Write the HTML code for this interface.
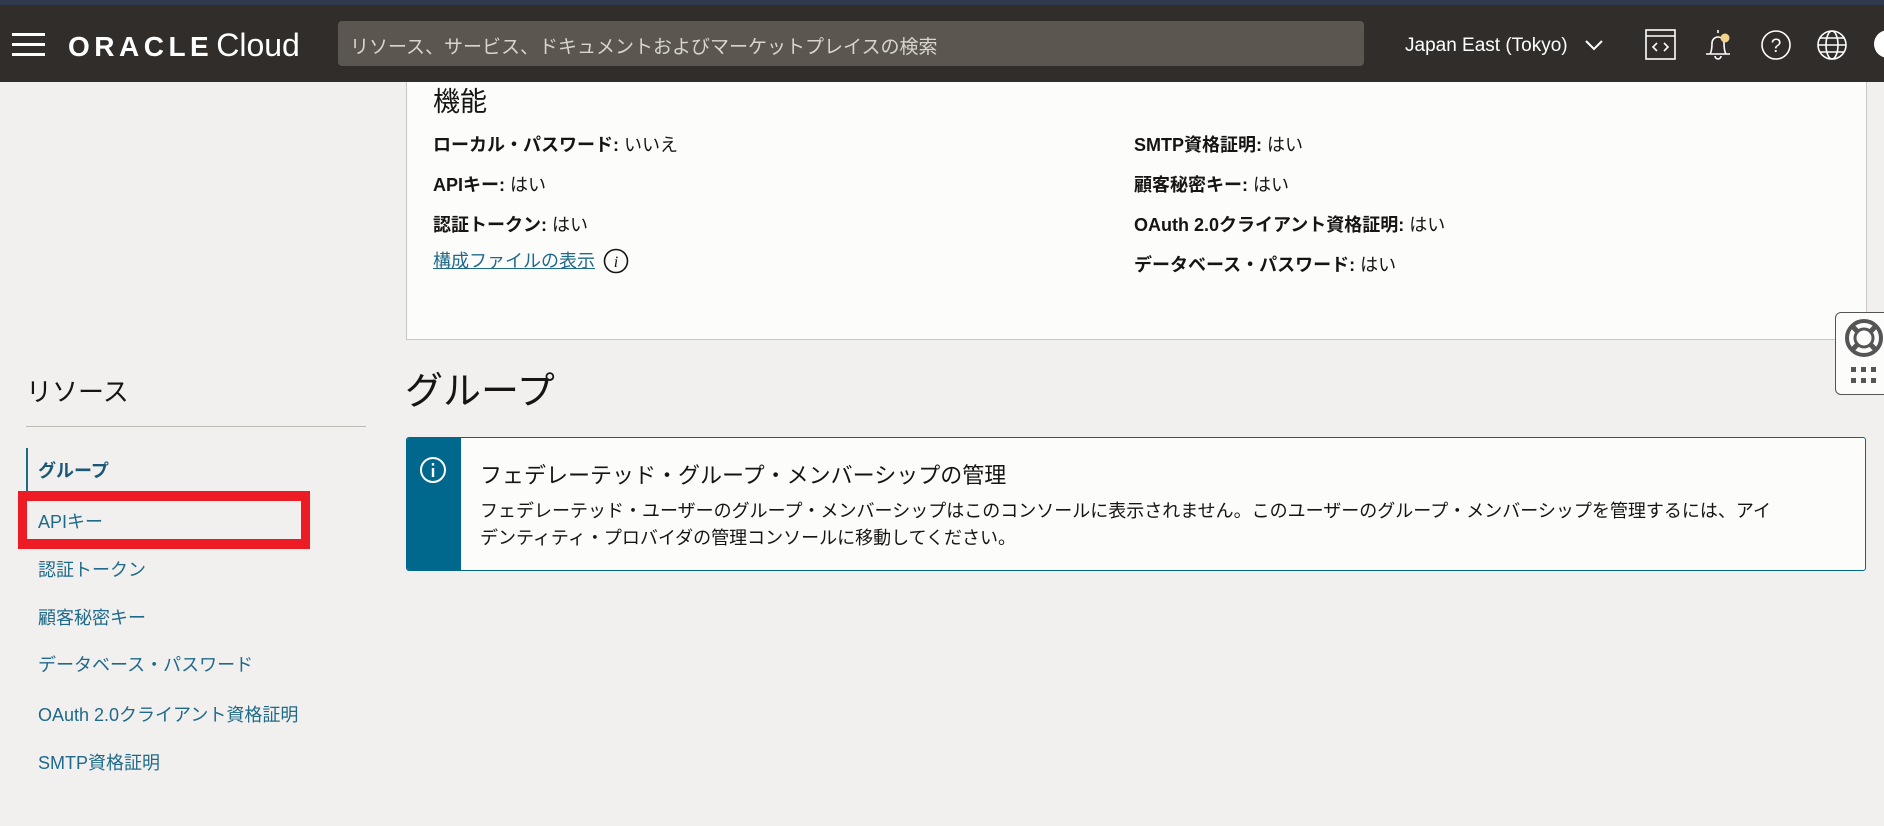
<!DOCTYPE html>
<html><head><meta charset="utf-8"><style>
*{margin:0;padding:0;box-sizing:border-box}
body{width:1884px;height:826px;overflow:hidden;background:#f1f0ee;font-family:"Liberation Sans","Noto Sans CJK JP",sans-serif;position:relative;color:#161513}
.abs{position:absolute}
.strip{left:0;top:0;width:1884px;height:5px;background:#2f3a4d}
.hdr{left:0;top:5px;width:1884px;height:77px;background:#312d2a}
.card{left:406px;top:82px;width:1461px;height:258px;background:#fcfcfb;border:1px solid #c9c7c4;border-top:none}
.row{font-size:18px;white-space:nowrap}
.row b{font-weight:bold}
.side{font-size:18px;color:#1f6a8a;left:38px;white-space:nowrap}
</style></head><body>
<div class="abs strip"></div>
<div class="abs hdr"></div>
<div class="abs" style="left:12px;top:33px;width:33px;height:3px;background:#fff"></div>
<div class="abs" style="left:12px;top:43px;width:33px;height:3px;background:#fff"></div>
<div class="abs" style="left:12px;top:53px;width:33px;height:3px;background:#fff"></div>
<div class="abs" style="left:68px;top:28px;color:#fff;line-height:34px;white-space:nowrap"><span style="font-weight:bold;letter-spacing:4.5px;font-size:28px">ORACLE</span><span style="font-size:32px;margin-left:3px">Cloud</span></div>
<div class="abs" style="left:338px;top:21px;width:1026px;height:45px;background:#5b5650;border-radius:4px"></div>
<div class="abs" style="left:350px;top:32px;font-size:19px;color:#d8d5d0;white-space:nowrap">リソース、サービス、ドキュメントおよびマーケットプレイスの検索</div>
<div class="abs" style="left:1405px;top:35px;font-size:19px;color:#fff;white-space:nowrap">Japan East (Tokyo)</div>
<svg class="abs" style="left:1584px;top:38px" width="20" height="14"><path d="M2 3 L10 11 L18 3" stroke="#fff" stroke-width="2" fill="none"/></svg>
<svg class="abs" style="left:1645px;top:28px" width="32" height="34" fill="none" stroke="#fff" stroke-width="1.6"><rect x="1" y="2" width="29" height="29"/><line x1="1" y1="8" x2="30" y2="8"/><path d="M12 15l-4 4 4 4M19 15l4 4-4 4"/></svg>
<svg class="abs" style="left:1702px;top:28px" width="34" height="34" fill="none" stroke="#fff" stroke-width="1.6"><path d="M16 2v3M8 26c2-3 2-8 2-11a6 6 0 0 1 12 0c0 3 0 8 2 11zM4 26h24M13 28a3 3 0 0 0 6 0"/><circle cx="23" cy="10" r="4.5" fill="#f5d38b" stroke="none"/></svg>
<svg class="abs" style="left:1759px;top:28px" width="34" height="34" fill="none" stroke="#fff" stroke-width="1.6"><circle cx="17" cy="17" r="14"/><text x="17" y="24" font-size="19" fill="#fff" stroke="none" text-anchor="middle" font-family="Liberation Sans">?</text></svg>
<svg class="abs" style="left:1815px;top:28px" width="34" height="34" fill="none" stroke="#fff" stroke-width="1.6"><circle cx="17" cy="17" r="14"/><ellipse cx="17" cy="17" rx="6" ry="14"/><path d="M3 17h28M5 10h24M5 24h24"/></svg>
<div class="abs" style="left:1874px;top:30px;width:28px;height:28px;border-radius:50%;background:#fff"></div>
<div class="abs card"></div>
<div class="abs" style="left:433px;top:80px;font-size:27px;white-space:nowrap">機能</div>
<div class="abs row" style="left:433px;top:131px"><b>ローカル・パスワード:</b> いいえ</div>
<div class="abs row" style="left:433px;top:171px"><b>APIキー:</b> はい</div>
<div class="abs row" style="left:433px;top:211px"><b>認証トークン:</b> はい</div>
<div class="abs row" style="left:433px;top:247px;color:#1f6a8a;text-decoration:underline">構成ファイルの表示</div>
<svg class="abs" style="left:603px;top:248px" width="26" height="26"><circle cx="13" cy="13" r="11.5" fill="none" stroke="#161513" stroke-width="1.6"/><text x="13" y="19" font-size="16" font-style="italic" text-anchor="middle" font-family="Liberation Serif" fill="#161513">i</text></svg>
<div class="abs row" style="left:1134px;top:131px"><b>SMTP資格証明:</b> はい</div>
<div class="abs row" style="left:1134px;top:171px"><b>顧客秘密キー:</b> はい</div>
<div class="abs row" style="left:1134px;top:211px"><b>OAuth 2.0クライアント資格証明:</b> はい</div>
<div class="abs row" style="left:1134px;top:251px"><b>データベース・パスワード:</b> はい</div>
<div class="abs" style="left:1835px;top:312px;width:60px;height:83px;background:#fcfcfb;border:1.5px solid #555;border-radius:6px"></div>
<svg class="abs" style="left:1842px;top:316px" width="44" height="44" fill="none" stroke="#555"><circle cx="22" cy="22" r="17" stroke-width="4"/><circle cx="22" cy="22" r="9" stroke-width="3"/><path d="M10 10l6 6M34 10l-6 6M10 34l6-6M34 34l-6-6" stroke-width="5"/></svg>
<div class="abs" style="left:1851px;top:367px;width:30px;height:18px;background:linear-gradient(#555,#555) 0 0/5px 5px,linear-gradient(#555,#555) 10px 0/5px 5px,linear-gradient(#555,#555) 20px 0/5px 5px,linear-gradient(#555,#555) 0 11px/5px 5px,linear-gradient(#555,#555) 10px 11px/5px 5px,linear-gradient(#555,#555) 20px 11px/5px 5px;background-repeat:no-repeat"></div>
<div class="abs" style="left:26px;top:372px;font-size:26px;color:#161513">リソース</div>
<div class="abs" style="left:26px;top:426px;width:340px;height:1px;background:#bdbab6"></div>
<div class="abs" style="left:26px;top:448px;width:2px;height:44px;background:#1f6a8a"></div>
<div class="abs side" style="top:457px;font-weight:bold;color:#1a5877">グループ</div>
<div class="abs side" style="top:508px">APIキー</div>
<div class="abs side" style="top:556px">認証トークン</div>
<div class="abs side" style="top:604px">顧客秘密キー</div>
<div class="abs side" style="top:651px">データベース・パスワード</div>
<div class="abs side" style="top:701px">OAuth 2.0クライアント資格証明</div>
<div class="abs side" style="top:749px">SMTP資格証明</div>
<div class="abs" style="left:18px;top:491px;width:292px;height:58px;border:10px solid #ed1c24;border-left-width:9px;border-right-width:9px"></div>
<div class="abs" style="left:405px;top:360px;font-size:38px;white-space:nowrap">グループ</div>
<div class="abs" style="left:406px;top:437px;width:1460px;height:134px;background:#fcfcfb;border:1px solid #00688c;border-radius:3px;overflow:hidden">
<div style="position:absolute;left:0;top:0;width:54px;height:134px;background:#00688c"></div>
</div>
<svg class="abs" style="left:419px;top:456px" width="28" height="28"><circle cx="14" cy="14" r="12" fill="none" stroke="#fff" stroke-width="2"/><rect x="12.8" y="12" width="2.4" height="9" fill="#fff"/><rect x="12.8" y="7" width="2.4" height="2.6" fill="#fff"/></svg>
<div class="abs" style="left:480px;top:458px;font-size:22px;white-space:nowrap">フェデレーテッド・グループ・メンバーシップの管理</div>
<div class="abs" style="left:480px;top:498px;font-size:18px;line-height:27px;width:1300px">フェデレーテッド・ユーザーのグループ・メンバーシップはこのコンソールに表示されません。このユーザーのグループ・メンバーシップを管理するには、アイデンティティ・プロバイダの管理コンソールに移動してください。</div>
</body></html>
